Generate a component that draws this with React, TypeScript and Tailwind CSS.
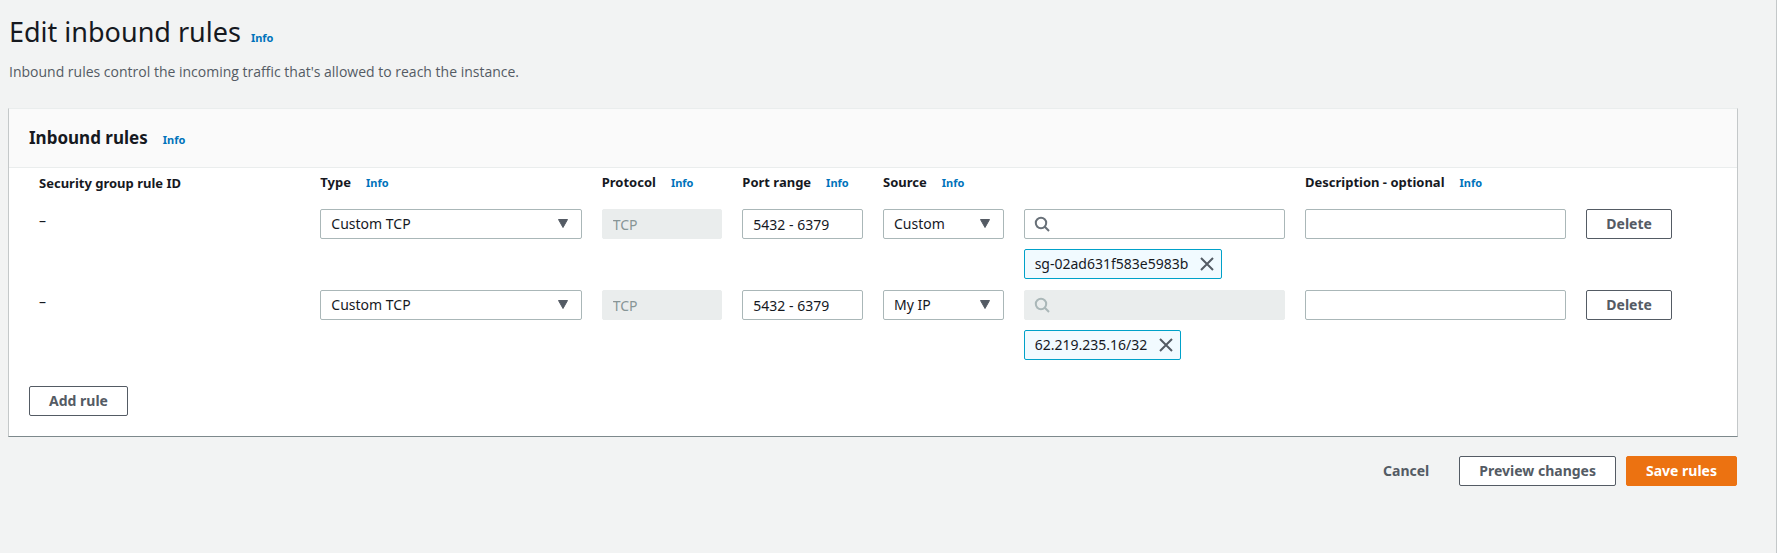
import { ReactNode, useState } from "react";

type Rule = {
  id: number;
  type: string;
  protocol: string;
  ports: string;
  source: string;
  target: string;
  locked: boolean;
};

const initialRules: Rule[] = [
  { id: 1, type: "Custom TCP", protocol: "TCP", ports: "5432 - 6379", source: "Custom", target: "sg-02ad631f583e5983b", locked: false },
  { id: 2, type: "Custom TCP", protocol: "TCP", ports: "5432 - 6379", source: "My IP", target: "62.219.235.16/32", locked: true },
];

const field =
  "block h-[30px] w-full rounded-xs border border-[#aab7b8] bg-white px-[10px] text-sm text-[#16191f] disabled:border-[#eaeded] disabled:bg-[#eaeded] disabled:text-[#879596]";

function Info() {
  return (
    <a href="#info" className="text-[11px] font-bold text-[#0073bb]">
      Info
    </a>
  );
}

function Button({ children, kind = "normal", onClick }: { children: ReactNode; kind?: "normal" | "primary" | "link"; onClick?: () => void }) {
  const look = {
    normal: "border-[#545b64] bg-white text-[#545b64]",
    primary: "border-[#ec7211] bg-[#ec7211] text-white",
    link: "border-transparent text-[#545b64]",
  }[kind];
  return (
    <button type="button" onClick={onClick} className={`h-[30px] rounded-xs border px-[19px] text-sm font-bold whitespace-nowrap ${look}`}>
      {children}
    </button>
  );
}

function Select({ label, value, options }: { label: string; value: string; options: string[] }) {
  return (
    <div className="relative">
      <select aria-label={label} defaultValue={value} className={`${field} appearance-none`}>
        {options.map((o) => (
          <option key={o}>{o}</option>
        ))}
      </select>
      <svg viewBox="0 0 10 9" className="pointer-events-none absolute top-[10px] right-[14px] h-[9px] w-[10px]" fill="#545b64">
        <path d="M.5 .5h9L5 8.5z" stroke="#545b64" strokeLinejoin="round" />
      </svg>
    </div>
  );
}

function SearchBox({ disabled }: { disabled: boolean }) {
  return (
    <div className="relative">
      <input type="search" aria-label="Source" disabled={disabled} className={`${field} pl-8`} />
      <svg
        viewBox="0 0 16 16"
        className={`pointer-events-none absolute top-[7px] left-[10px] size-4 ${disabled ? "text-[#aab7b8]" : "text-[#687078]"}`}
        fill="none"
        stroke="currentColor"
        strokeWidth="2"
      >
        <circle cx="7" cy="7" r="5.2" />
        <path d="M10.8 10.8 15 15" />
      </svg>
    </div>
  );
}

function Token({ children }: { children: ReactNode }) {
  return (
    <div className="mt-[10px] flex h-[30px] w-fit items-center gap-[11px] rounded-xs border border-[#00a1c9] bg-[#f1faff] pr-[6px] pl-[10px] text-sm text-[#16191f]">
      {children}
      <button type="button" aria-label="Remove source" className="text-[#545b64]">
        <svg viewBox="0 0 16 16" className="size-4" fill="none" stroke="currentColor" strokeWidth="2">
          <path d="M2 2l12 12M14 2L2 14" />
        </svg>
      </button>
    </div>
  );
}

function Heading({ children, info = true, span = 1 }: { children: ReactNode; info?: boolean; span?: number }) {
  return (
    <th colSpan={span} className="px-[10px] pt-1 pb-4 text-left text-[13px] leading-5 font-bold whitespace-nowrap">
      <span className="mr-[15px]">{children}</span>
      {info && <Info />}
    </th>
  );
}

export default function App() {
  const [rules, setRules] = useState(initialRules);
  const addRule = () =>
    setRules([...rules, { id: Date.now(), type: "Custom TCP", protocol: "TCP", ports: "", source: "Custom", target: "0.0.0.0/0", locked: false }]);

  return (
    <div className="flex min-h-screen bg-white font-['Noto_Sans','Open_Sans',sans-serif] text-[#16191f]">
      <main className="min-w-0 flex-1 border-r border-[#c4c8c9] bg-[#f2f3f3] pr-[38px] pl-2">
        <header className="px-px pt-3">
          <h1 className="flex items-baseline gap-[10px] text-[27px] leading-10">
            Edit inbound rules <Info />
          </h1>
          <p className="mt-1 font-['Open_Sans',sans-serif] text-sm text-[#545b64]">
            Inbound rules control the incoming traffic that's allowed to reach the instance.
          </p>
        </header>

        <section className="mt-[26px] border border-t-[#eaeded] border-r-[#c4c8c9] border-b-[#7d898c] border-l-[#c4c8c9] bg-white">
          <div className="flex items-baseline gap-[15px] border-b border-[#eaeded] bg-[#fafafa] px-5 py-[15px]">
            <h2 className="text-[17px] leading-7 font-bold">Inbound rules</h2>
            <Info />
          </div>
          <div className="px-5">
            <table className="w-full table-fixed">
              <colgroup>
                <col className="w-2/12" />
                <col className="w-2/12" />
                <col className="w-1/12" />
                <col className="w-1/12" />
                <col className="w-1/12" />
                <col className="w-2/12" />
                <col className="w-2/12" />
                <col className="w-1/12" />
              </colgroup>
              <thead>
                <tr>
                  <Heading info={false}>Security group rule ID</Heading>
                  <Heading>Type</Heading>
                  <Heading>Protocol</Heading>
                  <Heading>Port range</Heading>
                  <Heading span={2}>Source</Heading>
                  <Heading>Description - optional</Heading>
                  <td />
                </tr>
              </thead>
              <tbody>
                {rules.map((rule) => (
                  <tr key={rule.id} className="align-top *:px-[10px] *:pb-[11px]">
                    <td className="text-sm leading-6">–</td>
                    <td>
                      <Select label="Type" value={rule.type} options={["Custom TCP", "Custom UDP", "All traffic"]} />
                    </td>
                    <td>
                      <input aria-label="Protocol" disabled defaultValue={rule.protocol} className={field} />
                    </td>
                    <td>
                      <input aria-label="Port range" defaultValue={rule.ports} className={field} />
                    </td>
                    <td>
                      <Select label="Source type" value={rule.source} options={["Custom", "Anywhere", "My IP"]} />
                    </td>
                    <td>
                      <SearchBox disabled={rule.locked} />
                      <Token>{rule.target}</Token>
                    </td>
                    <td>
                      <input aria-label="Description" className={field} />
                    </td>
                    <td>
                      <Button onClick={() => setRules(rules.filter((r) => r.id !== rule.id))}>Delete</Button>
                    </td>
                  </tr>
                ))}
              </tbody>
            </table>
            <div className="pt-[15px] pb-5">
              <Button onClick={addRule}>Add rule</Button>
            </div>
          </div>
        </section>

        <footer className="mt-[19px] flex justify-end gap-[10px] pr-px pb-5">
          <Button kind="link">Cancel</Button>
          <Button>Preview changes</Button>
          <Button kind="primary">Save rules</Button>
        </footer>
      </main>
      <div className="w-[6px]" />
    </div>
  );
}
